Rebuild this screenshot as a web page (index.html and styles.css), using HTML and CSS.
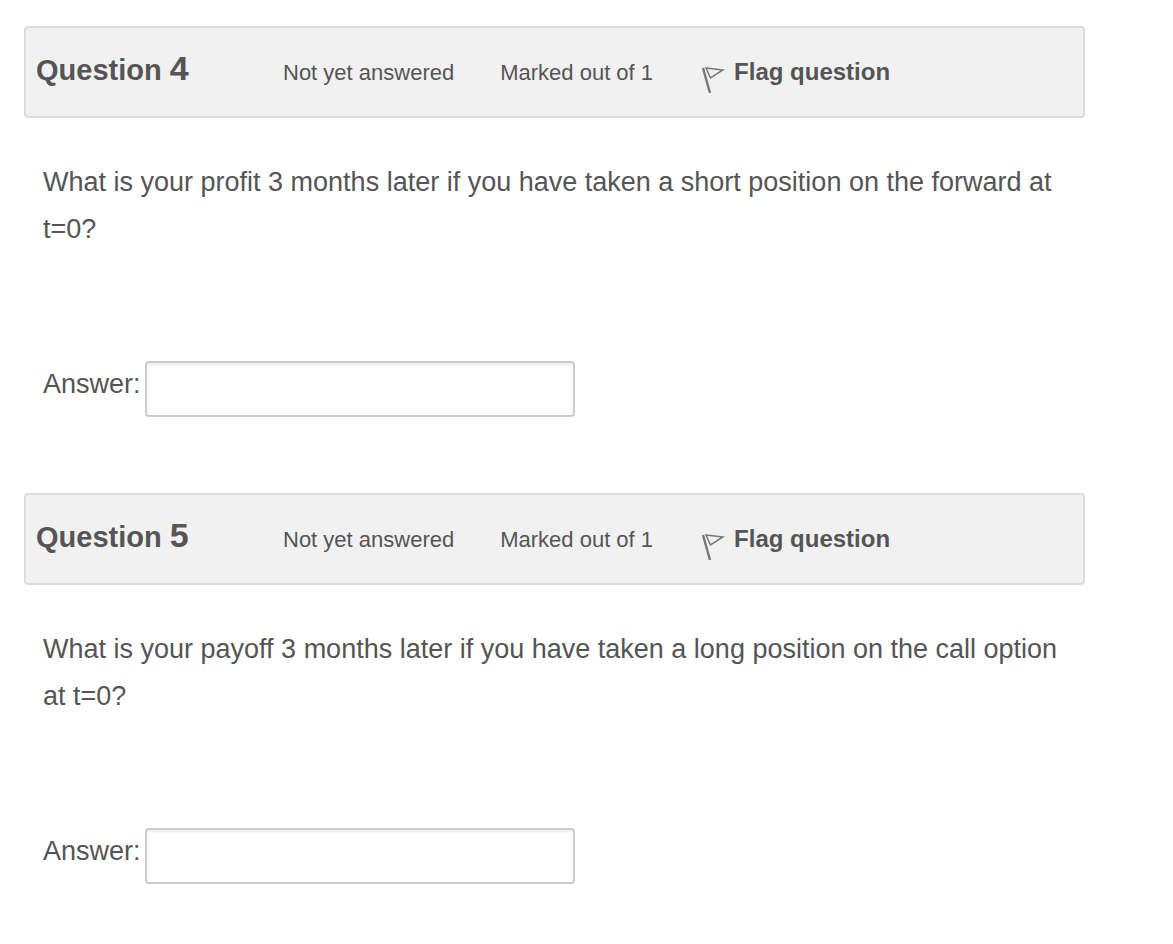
FILE: index.html
```html
<!DOCTYPE html>
<html lang="en">
<head>
  <meta charset="UTF-8" />
  <meta name="viewport" content="width=device-width, initial-scale=1.0"/>
  <title>Quiz</title>
  <link rel="stylesheet" href="styles.css">
</head>
<body>
  <main class="quiz">
    <form action="#" method="POST">
      <section class="question">
        <header class="info">
          <h3 class="number">Question <span class="qno">4</span></h3>
          <div class="state">Not yet answered</div>
          <div class="grade">Marked out of 1</div>
          <a class="flag" href="#">
            <svg class="flag-icon" viewBox="0 0 24 28" aria-hidden="true">
              <path d="M2 2 L9 27" stroke-width="2.4" />
              <path d="M5 2 L22 4 L9.500 12 Z" stroke-width="1.500" />
            </svg>
            <span class="flag-text">Flag question</span>
          </a>
        </header>
        <div class="content">
          <p class="qtext">What is your profit 3 months later if you have taken a short position on the forward at t=0?</p>
          <div class="answer">
            <label for="q4">Answer:</label>
            <input type="text" name="q4" id="q4" />
          </div>
        </div>
      </section>

      <section class="question">
        <header class="info">
          <h3 class="number">Question <span class="qno">5</span></h3>
          <div class="state">Not yet answered</div>
          <div class="grade">Marked out of 1</div>
          <a class="flag" href="#">
            <svg class="flag-icon" viewBox="0 0 24 28" aria-hidden="true">
              <path d="M2 2 L9 27" stroke-width="2.4" />
              <path d="M5 2 L22 4 L9.500 12 Z" stroke-width="1.500" />
            </svg>
            <span class="flag-text">Flag question</span>
          </a>
        </header>
        <div class="content">
          <p class="qtext">What is your payoff 3 months later if you have taken a long position on the call option at t=0?</p>
          <div class="answer">
            <label for="q5">Answer:</label>
            <input type="text" name="q5" id="q5" />
          </div>
        </div>
      </section>
    </form>
  </main>
</body>
</html>
```

FILE: styles.css
```css
* {
  margin: 0;
  padding: 0;
  box-sizing: border-box;
}

body {
  background-color: #fff;
  color: #555;
  font-family: "Liberation Sans", Arial, sans-serif;
  font-size: 27px;
}

.quiz {
  padding: 26px 88px 0 24px;
}

.question {
  margin-bottom: 76px;
}

.info {
  display: flex;
  align-items: baseline;
  min-height: 92px;
  padding: 20px 10px;
  background-color: #f1f1f1;
  border: 2px solid #dcdcdc;
  border-radius: 4px;
  font-size: 22px;
}

.number {
  flex: 0 0 247px;
  font-size: 29px;
  line-height: 40px;
}

.qno {
  font-size: 34px;
}

.grade {
  margin-left: 46px;
}

.flag {
  display: flex;
  align-items: flex-start;
  margin-left: 48px;
  gap: 9px;
  color: #555;
  font-size: 24px;
  font-weight: bold;
  text-decoration: none;
}

.flag-text {
  align-self: baseline;
}

.flag-icon {
  width: 24px;
  height: 28px;
  margin-top: 8px;
  fill: none;
  stroke: #777;
}

.content {
  padding: 41px 19px 0;
}

.qtext {
  line-height: 47px;
}

.answer {
  display: flex;
  align-items: flex-start;
  gap: 4px;
  margin-top: 108px;
}

.answer label {
  line-height: 47px;
}

.answer input {
  width: 430px;
  height: 56px;
  padding: 8px 12px;
  border: 2px solid #ccc;
  border-radius: 4px;
  box-shadow: inset 0 2px 3px rgba(0, 0, 0, 0.08);
  color: #555;
  font: inherit;
}

.answer input:focus {
  outline: none;
  border-color: #66afe9;
}

@media (max-width: 700px) {
  .quiz {
    padding: 16px;
  }

  .info {
    flex-wrap: wrap;
  }

  .answer input {
    flex: 1;
    min-width: 0;
  }
}
```
